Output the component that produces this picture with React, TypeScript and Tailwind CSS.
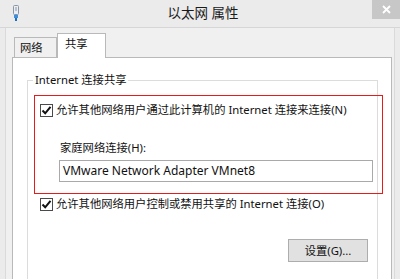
const font = "font-['Noto_Sans','Noto_Sans_CJK_SC',sans-serif]";

const PlugIcon = () => (
  <svg width="8" height="16" viewBox="0 0 8 16" className="shrink-0">
    <rect x="1.5" y="0.5" width="5" height="9" rx="1" fill="#e8eef4" stroke="#8a96a3" />
    <rect x="3" y="2" width="2" height="4" fill="#b8c3cf" />
    <rect x="2" y="10" width="4" height="3" fill="#3a8fe0" />
    <rect x="3" y="13" width="2" height="3" fill="#1f6fc0" />
  </svg>
);

const Check = ({ checked = true }: { checked?: boolean }) => (
  <span className="w-[13px] h-[13px] shrink-0 border border-[#4a4a4a] bg-white flex items-center justify-center">
    {checked && (
      <svg width="11" height="11" viewBox="0 0 11 11">
        <path d="M1.5 5.5 L4.2 8.3 L9.5 1.8" fill="none" stroke="#111" strokeWidth="2" />
      </svg>
    )}
  </span>
);

export default function App() {
  return (
    <div className={`w-[400px] h-[279px] overflow-hidden bg-[#ebebeb] flex flex-col text-[#111] ${font}`}>
      {/* 标题栏 */}
      <div className="h-[28px] shrink-0 flex items-start border-b border-[#d6d6d6]">
        <div className="pl-[12px] pt-[5px]">
          <PlugIcon />
        </div>
        <div className="flex-1 text-center pt-[4px] pl-[14px] text-[13.5px] leading-[18px] text-[#1a1a1a]">
          以太网 属性
        </div>
        <div className="w-[28px] h-[19px] bg-[#c7c7c7] flex items-center justify-center">
          <svg width="9" height="9" viewBox="0 0 9 9">
            <path d="M1 1 L8 8 M8 1 L1 8" stroke="#fff" strokeWidth="1.8" />
          </svg>
        </div>
      </div>

      {/* 窗体 */}
      <div className="flex-1 ml-[5px] mr-[5px] border-l border-r border-[#dadada] bg-[#f0f0f0] pl-[6px] pr-[2px] pt-[5px] flex flex-col">
        <div className="flex items-end pl-[2px] h-[24px] text-[11.3px]">
          <div className="w-[43px] h-[20px] border border-b-0 border-[#b9b9b9] bg-[#f0f0f0] pl-[5px] leading-[19px]">
            网络
          </div>
          <div className="relative z-10 -mb-px w-[49px] h-[25px] border border-b-0 border-[#b9b9b9] bg-white pl-[7px] leading-[20px]">
            共享
          </div>
        </div>

        <div className="flex-1 bg-white border border-[#b9b9b9] pl-[14px] pr-[13px] pt-[14px] text-[11.3px]">
          <fieldset className="min-w-0 border border-[#dcdcdc] pl-[5px] pr-[9px] pb-[20px] flex flex-col">
            <legend className="px-[2px] leading-[16px]">Internet 连接共享</legend>

            <div className="mt-[7px] ml-[1px] w-[349px] shrink-0 border border-[#e51c1c] pl-[5px] pt-[6px] pb-[11px]">
              <div className="flex items-center h-[16px]">
                <Check />
                <span className="ml-[3px] leading-[16px] whitespace-nowrap">
                  允许其他网络用户通过此计算机的 Internet 连接来连接(N)
                </span>
              </div>
              <div className="pl-[19px] mt-[22px]">
                <div className="pl-[1px] leading-[16px]">家庭网络连接(H):</div>
                <div className="mt-[4px] w-[314px] h-[22px] border border-[#a9a9a9] bg-white pl-[3px] flex items-center text-[12px] whitespace-nowrap">
                  VMware Network Adapter VMnet8
                </div>
              </div>
            </div>

            <div className="mt-[2px] pl-[7px] flex items-center h-[16px]">
              <Check />
              <span className="ml-[3px] leading-[16px] whitespace-nowrap">
                允许其他网络用户控制或禁用共享的 Internet 连接(O)
              </span>
            </div>

            <div className="mt-[27px] flex justify-end">
              <button
                type="button"
                className="w-[80px] h-[23px] border border-[#adadad] bg-[#e1e1e1] text-[11.3px] leading-[21px] text-[#111]"
              >
                设置(G)...
              </button>
            </div>
          </fieldset>
        </div>
      </div>
    </div>
  );
}
